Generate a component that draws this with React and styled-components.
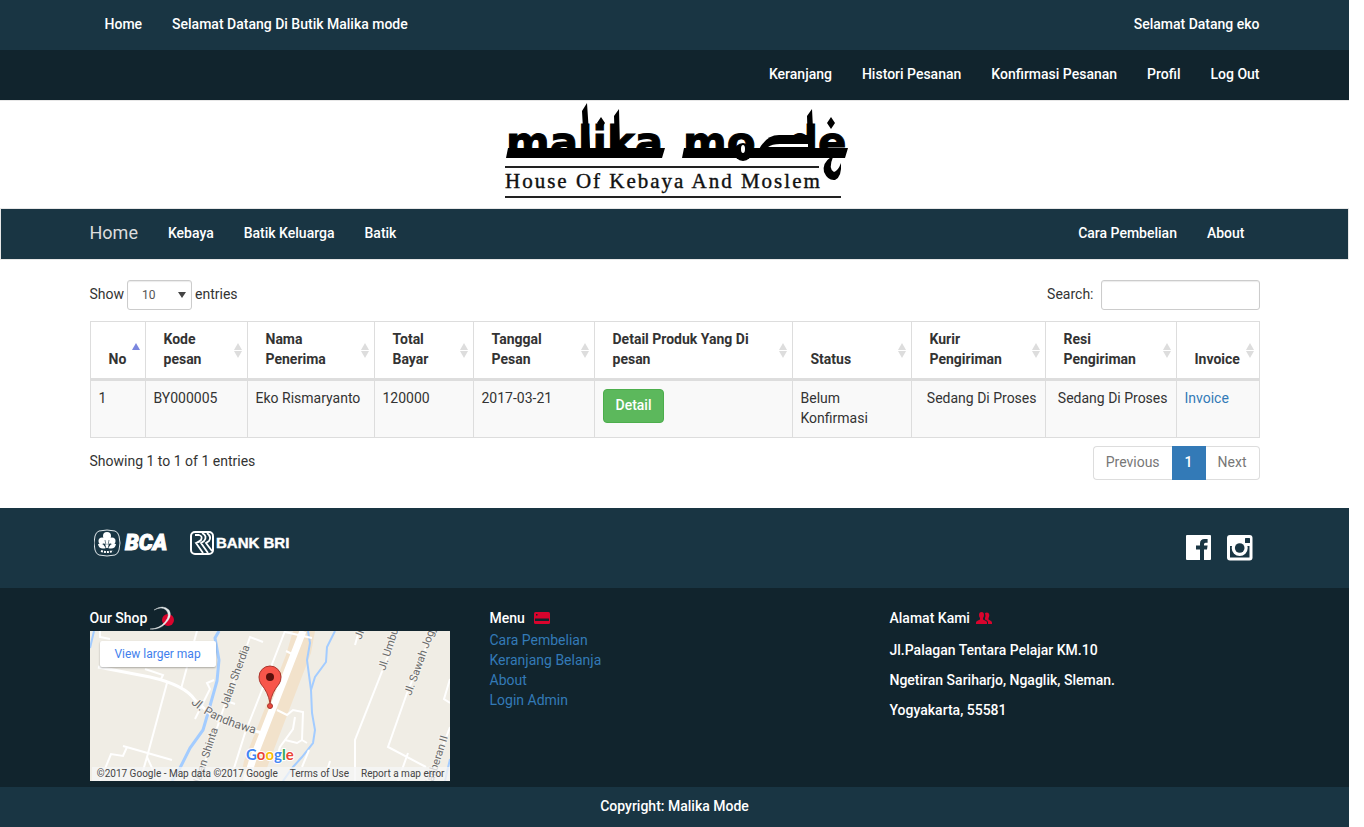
import React from 'react';
import styled, { createGlobalStyle } from 'styled-components';

const NAVY = '#193543';
const DARK = '#11242d';
const RED = '#d9042d';

const GlobalStyle = createGlobalStyle`
  *, *::before, *::after { box-sizing: border-box; }
  body {
    margin: 0;
    background: #fff;
    color: #333;
    font-family: Roboto, "Liberation Sans", sans-serif;
    font-size: 14px;
    line-height: 20px;
  }
  a { color: #337ab7; text-decoration: none; }
  p { margin: 0; }
  button, input, select { font: inherit; }
`;

const Page = styled.div`
  padding-right: 15px;
`;

const Container = styled.div`
  max-width: 1170px;
  margin: 0 auto;
`;

const Bar = styled.nav`
  background: ${(p) => (p.$dark ? DARK : NAVY)};
  border: ${(p) => (p.$outlined ? '1px solid #e7e7e7' : 'none')};
`;

const BarInner = styled(Container)`
  display: flex;
  align-items: center;
  justify-content: ${(p) => (p.$end ? 'flex-end' : 'space-between')};
  height: 50px;
  padding: ${(p) => p.$pad || '0'};
  padding-bottom: 2px;
`;

const NavGroup = styled.div`
  display: flex;
  align-items: center;
  gap: 30px;
`;

const NavLink = styled.a`
  color: #fff;
  font-weight: 500;
`;

const Brand = styled.a`
  color: #ddd;
  font-size: 18px;
`;

const Masthead = styled.header`
  display: flex;
  justify-content: center;
  border-top: 1px solid #e7e7e7;
`;

const Main = styled.main`
  padding: 20px 0 28px;
`;

const Spread = styled.div`
  display: flex;
  justify-content: space-between;
  align-items: flex-start;
`;

const Field = styled.label`
  display: flex;
  align-items: flex-start;
  height: 30px;
  padding-top: 4px;
  gap: ${(p) => p.$gap || 3}px;
`;

const SelectWrap = styled.span`
  position: relative;
  display: flex;
  width: 65px;
  margin-top: -4px;
`;

const Select = styled.select`
  appearance: none;
  width: 100%;
  height: 30px;
  padding: 0 14px;
  border: 1px solid #ccc;
  border-radius: 3px;
  background: #fff;
  color: #555;
  font-size: 12px;
  box-shadow: inset 0 1px 1px rgba(0, 0, 0, 0.08);
`;

const Caret = styled.i`
  position: absolute;
  right: 6px;
  top: 12px;
  border: 4px solid transparent;
  border-top: 6px solid #444;
  border-bottom: 0;
  pointer-events: none;
`;

const SearchInput = styled.input`
  width: 159px;
  height: 30px;
  margin-top: -4px;
  padding: 5px 10px;
  border: 1px solid #ccc;
  border-radius: 3px;
  font-size: 12px;
  box-shadow: inset 0 1px 1px rgba(0, 0, 0, 0.08);
`;

const Table = styled.table`
  width: 100%;
  margin: 11px 0 8px;
  table-layout: fixed;
  border-collapse: separate;
  border-spacing: 0;
  border-top: 1px solid #ddd;
  border-left: 1px solid #ddd;
`;

const Col = styled.col`
  width: ${(p) => p.$w}px;
`;

const Th = styled.th`
  padding: 7px 5px 9px 18px;
  border-right: 1px solid #ddd;
  border-bottom: 3px solid #ddd;
  text-align: left;
`;

const SortButton = styled.button`
  display: flex;
  align-items: flex-end;
  justify-content: space-between;
  gap: 4px;
  width: 100%;
  min-height: 40px;
  padding: 0;
  border: 0;
  background: none;
  color: #333;
  font-weight: 700;
  text-align: left;
`;

const SortMark = styled.span`
  display: grid;
  gap: 1px;
  align-self: center;
  flex: none;
  padding-top: 2px;
  &::before, &::after {
    content: '';
    border: 4px solid transparent;
  }
  &::before {
    border-top: 0;
    border-bottom: 7px solid ${(p) => (p.$active ? '#7b86de' : '#ddd')};
  }
  &::after {
    border-bottom: 0;
    border-top: 7px solid ${(p) => (p.$active ? 'transparent' : '#ddd')};
  }
`;

const Td = styled.td`
  padding: 7px 8px 9px;
  background: #f9f9f9;
  border-right: 1px solid #ddd;
  border-bottom: 1px solid #ddd;
  vertical-align: top;
  text-align: ${(p) => (p.$right ? 'right' : 'left')};
`;

const DetailButton = styled.button`
  display: block;
  height: 34px;
  margin-top: 1px;
  padding: 0 12px 2px;
  border: 1px solid #4cae4c;
  border-radius: 4px;
  background: #5cb85c;
  color: #fff;
  font-weight: 500;
`;

const Info = styled.p`
  padding-top: 5px;
`;

const Pager = styled.div`
  display: flex;
  height: 34px;
`;

const PageButton = styled.button`
  padding: 0 12px 2px;
  border: 1px solid ${(p) => (p.$active ? '#337ab7' : '#ddd')};
  border-left-width: ${(p) => (p.$last ? 0 : 1)}px;
  border-right-width: ${(p) => (p.$first ? 0 : 1)}px;
  border-radius: ${(p) => (p.$first ? '4px 0 0 4px' : p.$last ? '0 4px 4px 0' : '0')};
  background: ${(p) => (p.$active ? '#337ab7' : '#fff')};
  color: ${(p) => (p.$active ? '#fff' : '#777')};
  font-weight: ${(p) => (p.$active ? 500 : 400)};
`;

const Partners = styled.section`
  background: ${NAVY};
`;

const PartnersInner = styled(Container)`
  display: flex;
  justify-content: space-between;
  height: 80px;
  padding: 20px 7px 0 4px;
`;

const LogoRow = styled.div`
  display: flex;
  align-items: flex-start;
  gap: 21px;
`;

const SocialRow = styled.div`
  display: flex;
  gap: 15px;
  padding-top: 7px;
`;

const FooterBody = styled.footer`
  background: ${DARK};
  color: #fff;
  font-weight: 500;
`;

const FooterGrid = styled(Container)`
  display: grid;
  grid-template-columns: repeat(3, 1fr);
  gap: 30px;
  padding: 20px 0 6px;
`;

const FooterTitle = styled.h2`
  display: flex;
  align-items: center;
  gap: ${(p) => p.$gap}px;
  height: 20px;
  margin: 0 0 ${(p) => p.$mb || 2}px;
  font-size: 14px;
  font-weight: 500;
`;

const LinkList = styled.ul`
  list-style: none;
  margin: 0;
  padding: 0;
  font-weight: 400;
`;

const Address = styled.p`
  margin-top: 10px;
`;

const Copyright = styled.div`
  background: ${NAVY};
  color: #fff;
  font-weight: 500;
  text-align: center;
  padding: 9px 0 11px;
`;

const MapBox = styled.div`
  position: relative;
  max-width: 360px;
  height: 150px;
  overflow: hidden;
  background: #f0ede5;
  font-weight: 400;
  svg { display: block; }
`;

const MapLink = styled.a`
  position: absolute;
  left: 10px;
  top: 10px;
  width: 116px;
  height: 26px;
  border-radius: 2px;
  background: #fff;
  color: #427fed;
  font-size: 12px;
  line-height: 26px;
  text-align: center;
  box-shadow: 0 1px 2px rgba(0, 0, 0, 0.3);
`;

const MapCredits = styled.div`
  position: absolute;
  right: 0;
  bottom: 0;
  display: flex;
  gap: 12px;
  height: 14px;
  padding: 0 5px;
  background: rgba(245, 245, 245, 0.75);
  font-size: 10px;
  line-height: 14px;
  white-space: nowrap;
  color: #444;
  a { color: #444; }
`;

const Tagline = styled.text`
  font-family: "Liberation Serif", serif;
  font-size: 21px;
  letter-spacing: 2px;
  fill: #111;
  stroke: #111;
  stroke-width: 0.4px;
`;

const Wordmark = styled.text`
  font-family: "DejaVu Sans", sans-serif;
  font-weight: 700;
  font-size: 42px;
  stroke: #000;
  stroke-width: 1px;
`;

function MalikaLogo() {
  return (
    <svg width="350" height="107" viewBox="0 0 350 107" role="img" aria-label="Malika Mode">
      <Wordmark x="6" y="56">malika</Wordmark>
      <Wordmark x="183" y="56">mo<tspan x="288">de</tspan></Wordmark>
      <path d="M8 47H165L162 57H6ZM184 47H348L345 57H182Z" />
      <path d="M82 10L87 2L90 47H84ZM114 15L119 8L120 47H115ZM307 15L312 8L314 47H308Z" />
      <path d="M258 50Q266 34 279 34H311V50Z" />
      <path d="M268 46Q272 43 280 43H308V46Z" fill="#fff" />
      <ellipse cx="243" cy="51" rx="9" ry="9" />
      <ellipse cx="243" cy="48" rx="2" ry="4" fill="#fff" />
      <path d="M101 16L105 22L101 28L97 22ZM331 16L335 22L331 28L327 22Z" />
      <path d="M331 56Q322 62 324 71Q328 80 335 79Q342 76 341 62Q338 70 334 71Q328 68 333 56Z" />
      <path d="M5 66H319M5 96H341" stroke="#222" strokeWidth="2" />
      <Tagline x="5" y="87">House Of Kebaya And Moslem</Tagline>
    </svg>
  );
}

const BcaText = styled.text`
  font-family: Roboto, sans-serif;
  font-weight: 900;
  font-style: italic;
  font-size: 22px;
  fill: #fff;
  stroke: #fff;
  stroke-width: 1px;
`;

const BriText = styled.text`
  font-family: "Liberation Sans", sans-serif;
  font-weight: 700;
  font-size: 15px;
  fill: #fff;
  stroke: #fff;
  stroke-width: 0.4px;
`;

function BcaLogo() {
  return (
    <svg width="75" height="30" viewBox="0 0 75 30" role="img" aria-label="BCA">
      <path d="M5 3Q13 1 21 3Q24 4 25 8Q27 15 25 22Q24 26 21 27Q13 29 5 27Q2 26 1 22Q-1 15 1 8Q2 4 5 3Z" fill="none" stroke="#dfe6e9" />
      <g fill="#fff">
        <circle cx="13" cy="8" r="4" />
        <circle cx="8" cy="13" r="3.5" />
        <circle cx="18" cy="13" r="3.5" />
        <path d="M12 20Q5 22 4 16Q9 15 12 20ZM14 20Q21 22 22 16Q17 15 14 20Z" />
        <path d="M10 10H16L14 20H12Z" />
      </g>
      <path d="M12 20L9 15M14 20L17 15M11 12L12 17M15 12L14 17" stroke={NAVY} strokeWidth="0.6" />
      <path d="M7 23Q13 25 19 23" fill="none" stroke="#fff" strokeWidth="2" strokeDasharray="2 1" />
      <BcaText x="31" y="22">BCA</BcaText>
    </svg>
  );
}

function BriLogo() {
  return (
    <svg width="102" height="30" viewBox="0 0 102 30" role="img" aria-label="Bank BRI">
      <rect x="1" y="4" width="22" height="22" rx="4" fill="none" stroke="#fff" strokeWidth="2" />
      <path d="M5 7H9Q13 8 11 12Q9 14 6 15L13 25M12 5Q18 8 14 13L11 15L18 25M17 5Q22 9 19 13L16 15L22 23" fill="none" stroke="#fff" strokeWidth="1.8" />
      <BriText x="26" y="20">BANK BRI</BriText>
    </svg>
  );
}

function FacebookIcon() {
  return (
    <svg width="26" height="26" viewBox="0 0 26 26">
      <rect width="25" height="25" rx="1" fill="#fff" />
      <path d="M14 25V14.5H10V10.5H14V8.5Q14 4 18.5 4H21.6V7.8H19.6Q18 7.8 18 9.3V10.5H21.6L21 14.5H18V25Z" fill={NAVY} />
    </svg>
  );
}

function InstagramIcon() {
  return (
    <svg width="26" height="26" viewBox="0 0 26 26">
      <rect width="25.5" height="25.5" rx="3" fill="#fff" />
      <path d="M3 11H22.5V22.5H3Z" fill={NAVY} />
      <circle cx="12.7" cy="13" r="8" fill="#fff" />
      <circle cx="12.7" cy="13" r="4.8" fill={NAVY} />
      <rect x="18" y="3" width="5" height="5" rx="0.5" fill={NAVY} />
    </svg>
  );
}

function SwooshIcon() {
  return (
    <svg width="26" height="24" viewBox="0 0 26 24">
      <circle cx="18" cy="14" r="6" fill={RED} />
      <path d="M4 4Q13 -2 19 4Q23 10 15 18Q9 24 0 23Q9 23 15 16Q21 9 16 4Q12 0 4 4Z" fill="#e6eaec" stroke="#e6eaec" strokeWidth="0.4" />
    </svg>
  );
}

function CardIcon() {
  return (
    <svg width="16" height="12" viewBox="0 0 16 12">
      <rect width="16" height="12" rx="1.5" fill={RED} />
      <path d="M1 6.5H15V9H1Z" fill={DARK} />
      <rect x="2" y="2" width="1.5" height="1.5" fill={DARK} />
    </svg>
  );
}

function UsersIcon() {
  return (
    <svg width="16" height="12" viewBox="0 0 16 12" fill={RED}>
      <path d="M3 3Q3 0 5.5 0Q8 0 8 3Q8 5 7 6V7.5L10 9Q11 9.5 11 10.5V12H0V10.5Q0 9.5 1 9L4 7.5V6Q3 5 3 3Z" />
      <path d="M9 1Q11 0 12.5 1Q14 3 13 5L12.5 6V7.5L15 9Q16 9.5 16 10.5V12H12V10Q12 8.5 9 7.5V6Q10 4 9 1Z" />
    </svg>
  );
}

const StreetLabel = styled.text`
  font-family: Roboto, sans-serif;
  font-size: ${(p) => p.$size || 11}px;
  fill: #6b6b6b;
  stroke: #f5f3ee;
  stroke-width: 2px;
  paint-order: stroke;
`;

const GoogleMark = styled.text`
  font-family: Lato, sans-serif;
  font-weight: 700;
  font-size: 15px;
  stroke: #fff;
  stroke-width: 2px;
  paint-order: stroke;
`;

function ShopMap() {
  return (
    <MapBox>
      <svg width="360" height="150" viewBox="0 0 360 150" role="img" aria-label="Map of the shop">
        <path d="M203 0H225L221 22L178 134L172 150H150L154 130L196 24Z" fill="#f2e2cb" />
        <g fill="none" stroke="#a3ccff" strokeWidth="2">
          <path d="M129 0L125 7L129 29L127 50L118 82L113 99L100 117L90 137L82 150" strokeWidth="3" />
          <path d="M218 0L220 12L217 29L221 59L222 82L225 99L223 112L212 126L203 136L193 150" />
          <path d="M245 0L237 16L236 31L225 46L221 59M4 0L0 17M360 128L355 150" />
        </g>
        <g fill="none" stroke="#fff" strokeWidth="2">
          <path d="M8 36L60 46Q95 54 105 69L128 90L172 102" strokeWidth="3" />
          <path d="M173 11L160 6L153 26L133 79L122 112L108 150M195 0L170 64L155 102L140 150" />
          <path d="M195 1L222 7M196 20L204 24" />
          <path d="M77 52L57 126L50 150M33 115L82 129M37 116L33 125L21 123L10 150M57 126L68 150" />
          <path d="M107 0L97 36L91 58M10 0V6L20 8M55 38L73 44L71 48M124 49L117 52L120 58L105 88M137 70L145 73" />
          <path d="M187 79L197 84L203 79L213 81L212 109L207 112L195 109M212 109L217 112M205 86L203 98L190 116L185 132" />
          <path d="M308 0L265 109V150M343 0L317 62L298 116L336 136M318 122L308 150M219 119L212 136M240 130L234 150" />
          <path d="M269 0L265 14M360 48L354 68L360 72M360 96L340 150" />
        </g>
        <path d="M213 0L199 36L163 128L156 150" fill="none" stroke="#fff" strokeWidth="7" />
        <path id="pandhawa" d="M101 72Q118 91 170 104" fill="none" />
        <StreetLabel $size={12}><textPath href="#pandhawa">Jl. Pandhawa</textPath></StreetLabel>
        <StreetLabel transform="translate(137 78) rotate(-70)">Jalan Sherdia</StreetLabel>
        <StreetLabel transform="translate(128 98) rotate(-72)" textAnchor="end">Jalan Shinta</StreetLabel>
        <StreetLabel transform="translate(295 40) rotate(-72)">Jl. Umbul</StreetLabel>
        <StreetLabel transform="translate(321 65) rotate(-70)">Jl. Sawah Jogja</StreetLabel>
        <StreetLabel transform="translate(271 9) rotate(-68)">Jl.</StreetLabel>
        <StreetLabel transform="translate(358 106) rotate(-72)" textAnchor="end">Kaliberan II</StreetLabel>
        <path d="M180 72Q178 61 171 53Q169 50 169 46A11 11 0 0 1 191 46Q191 50 189 53Q182 61 180 72Z" fill="#f8554a" stroke="#a9352c" />
        <circle cx="180" cy="46" r="4" fill="#5a100c" />
        <circle cx="180" cy="75" r="2.5" fill="#ea4a40" stroke="#a9352c" />
        <GoogleMark x="156" y="129">
          <tspan fill="#4285f4">G</tspan>
          <tspan fill="#ea4335">o</tspan>
          <tspan fill="#fbbc05">o</tspan>
          <tspan fill="#4285f4">g</tspan>
          <tspan fill="#34a853">l</tspan>
          <tspan fill="#ea4335">e</tspan>
        </GoogleMark>
      </svg>
      <MapLink href="#map">View larger map</MapLink>
      <MapCredits>
        <span>©2017 Google - Map data ©2017 Google</span>
        <a href="#terms">Terms of Use</a>
        <a href="#report">Report a map error</a>
      </MapCredits>
    </MapBox>
  );
}

const columns = [
  ['No', 55], ['Kode pesan', 102], ['Nama Penerima', 127], ['Total Bayar', 99],
  ['Tanggal Pesan', 121], ['Detail Produk Yang Di pesan', 198], ['Status', 119],
  ['Kurir Pengiriman', 134], ['Resi Pengiriman', 131], ['Invoice', 83],
];

const menuLinks = ['Cara Pembelian', 'Keranjang Belanja', 'About', 'Login Admin'];

export default function App() {
  return (
    <Page>
      <GlobalStyle />
      <Bar>
        <BarInner $pad="0 0 0 15px">
          <NavGroup>
            <NavLink href="#home">Home</NavLink>
            <NavLink href="#welcome">Selamat Datang Di Butik Malika mode</NavLink>
          </NavGroup>
          <NavLink href="#user">Selamat Datang eko</NavLink>
        </BarInner>
      </Bar>
      <Bar $dark>
        <BarInner $end>
          <NavGroup>
            {['Keranjang', 'Histori Pesanan', 'Konfirmasi Pesanan', 'Profil', 'Log Out'].map((t) => (
              <NavLink key={t} href="#account">{t}</NavLink>
            ))}
          </NavGroup>
        </BarInner>
      </Bar>
      <Masthead><MalikaLogo /></Masthead>
      <Bar $outlined>
        <BarInner $pad="0 15px 0 0">
          <NavGroup>
            <Brand href="#home">Home</Brand>
            <NavLink href="#kebaya">Kebaya</NavLink>
            <NavLink href="#keluarga">Batik Keluarga</NavLink>
            <NavLink href="#batik">Batik</NavLink>
          </NavGroup>
          <NavGroup>
            <NavLink href="#cara">Cara Pembelian</NavLink>
            <NavLink href="#about">About</NavLink>
          </NavGroup>
        </BarInner>
      </Bar>

      <Main>
        <Container>
          <Spread>
            <Field>
              Show
              <SelectWrap>
                <Select defaultValue="10">
                  <option>10</option>
                  <option>25</option>
                </Select>
                <Caret />
              </SelectWrap>
              entries
            </Field>
            <Field $gap={7}>
              Search:
              <SearchInput type="search" />
            </Field>
          </Spread>
          <Table>
            <colgroup>
              {columns.map(([name, w]) => <Col key={name} $w={w} />)}
            </colgroup>
            <thead>
              <tr>
                {columns.map(([name], i) => (
                  <Th key={name} scope="col">
                    <SortButton type="button">{name}<SortMark $active={i === 0} /></SortButton>
                  </Th>
                ))}
              </tr>
            </thead>
            <tbody>
              <tr>
                <Td>1</Td>
                <Td>BY000005</Td>
                <Td>Eko Rismaryanto</Td>
                <Td>120000</Td>
                <Td>2017-03-21</Td>
                <Td><DetailButton type="button">Detail</DetailButton></Td>
                <Td>Belum Konfirmasi</Td>
                <Td $right>Sedang Di Proses</Td>
                <Td $right>Sedang Di Proses</Td>
                <Td><a href="#invoice">Invoice</a></Td>
              </tr>
            </tbody>
          </Table>
          <Spread>
            <Info>Showing 1 to 1 of 1 entries</Info>
            <Pager>
              <PageButton type="button" $first>Previous</PageButton>
              <PageButton type="button" $active>1</PageButton>
              <PageButton type="button" $last>Next</PageButton>
            </Pager>
          </Spread>
        </Container>
      </Main>

      <Partners>
        <PartnersInner>
          <LogoRow>
            <BcaLogo />
            <BriLogo />
          </LogoRow>
          <SocialRow>
            <a href="#facebook" aria-label="Facebook"><FacebookIcon /></a>
            <a href="#instagram" aria-label="Instagram"><InstagramIcon /></a>
          </SocialRow>
        </PartnersInner>
      </Partners>
      <FooterBody>
        <FooterGrid>
          <div>
            <FooterTitle $gap={3} $mb={3}>Our Shop <SwooshIcon /></FooterTitle>
            <ShopMap />
          </div>
          <div>
            <FooterTitle $gap={9}>Menu <CardIcon /></FooterTitle>
            <LinkList>
              {menuLinks.map((t) => <li key={t}><a href="#menu">{t}</a></li>)}
            </LinkList>
          </div>
          <div>
            <FooterTitle $gap={6} $mb={12}>Alamat Kami <UsersIcon /></FooterTitle>
            <Address>Jl.Palagan Tentara Pelajar KM.10</Address>
            <Address>Ngetiran Sariharjo, Ngaglik, Sleman.</Address>
            <Address>Yogyakarta, 55581</Address>
          </div>
        </FooterGrid>
      </FooterBody>
      <Copyright>Copyright: Malika Mode</Copyright>
    </Page>
  );
}
